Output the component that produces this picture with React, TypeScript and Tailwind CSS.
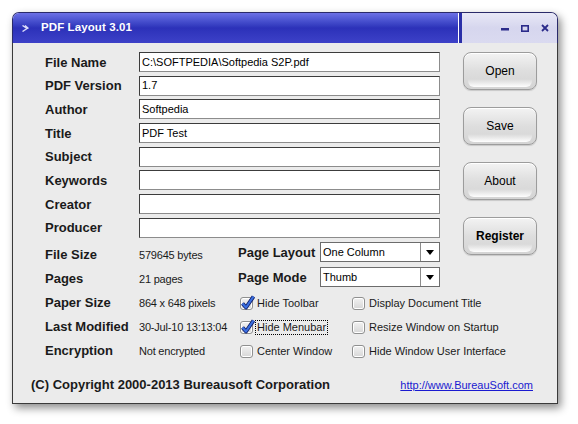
import React from 'react';

const font = { fontFamily: '"Liberation Sans", Arial, sans-serif' };

/**
 * Single text field row
 */
const FieldRow: React.FC<{ label: string; value?: string }> = ({ label, value = '' }) => (
    <div className="flex items-center h-[20px]">
        <div className="w-[94px] text-[13px] font-bold text-[#1a1a1a] leading-none">{label}</div>
        <div className="w-[301px] h-[20px] bg-white border border-t-[#3c3c3c] border-l-[#3c3c3c] border-b-[#8c8c8c] border-r-[#8c8c8c] flex items-center pl-[2px] text-[11px] text-black leading-none overflow-hidden whitespace-nowrap">
            {value}
        </div>
    </div>
);

/**
 * Glossy rounded button
 */
const GlossButton: React.FC<{ label: string; bold?: boolean }> = ({ label, bold }) => (
    <div className="relative w-[74px] h-[38px] rounded-[8px] border border-[#9c9c9c] bg-gradient-to-b from-[#f3f3f3] via-[#dedede] to-[#d4d4d4] shadow-[inset_0_1px_0_#ffffff,0_1px_1px_rgba(0,0,0,0.15)] flex items-center justify-center overflow-hidden">
        <div className="absolute left-[4px] right-[4px] bottom-[2px] h-[8px] rounded-b-[6px] bg-gradient-to-b from-transparent to-[#ffffff]"></div>
        <span className={`relative text-[12px] text-black ${bold ? 'font-bold' : ''}`}>{label}</span>
    </div>
);

/**
 * Checkbox
 */
const Check: React.FC<{ label: string; checked?: boolean; focus?: boolean }> = ({ label, checked, focus }) => (
    <div className="flex items-center h-[24px]">
        <div className="relative w-[13px] h-[13px] rounded-[3px] border border-[#8f9090] bg-gradient-to-b from-[#f2f2f2] to-[#d6d6d6] shadow-[inset_0_0_0_1px_#ffffff]">
            {checked && (
                <svg className="absolute left-[0px] top-[-3px]" width="14" height="15" viewBox="0 0 14 15">
                    <path d="M1.5 8.5 L5 12.5 L12.5 1.5" fill="none" stroke="#0f1f6a" strokeWidth="3.8" strokeLinejoin="round" />
                    <path d="M1.5 8.5 L5 12.5 L12.5 1.5" fill="none" stroke="#3b6fe0" strokeWidth="2.2" strokeLinejoin="round" />
                </svg>
            )}
        </div>
        <span className={`ml-[3px] text-[11px] text-[#1a1a1a] leading-[13px] px-[1px] ${focus ? 'outline outline-1 outline-dotted outline-black' : ''}`}>
            {label}
        </span>
    </div>
);

/**
 * Dropdown box
 */
const Dropdown: React.FC<{ value: string }> = ({ value }) => (
    <div className="w-[120px] h-[20px] bg-white border border-[#6c6c6c] flex">
        <div className="flex-1 flex items-center pl-[2px] text-[11px] text-black leading-none">{value}</div>
        <div className="w-[19px] border-l border-[#8c8c8c] flex items-center justify-center">
            <svg width="8" height="5" viewBox="0 0 8 5"><path d="M0 0 H8 L4 5 Z" fill="#000" /></svg>
        </div>
    </div>
);

const InfoLabel: React.FC<{ text: string }> = ({ text }) => (
    <div className="w-[94px] text-[13px] font-bold text-[#1a1a1a] leading-none">{text}</div>
);

const InfoValue: React.FC<{ text: string }> = ({ text }) => (
    <div className="w-[99px] text-[11px] text-[#1a1a1a] leading-none pt-[3px] tracking-[-0.2px] whitespace-nowrap">{text}</div>
);

export default function App() {
    return (
        <div className="w-[578px] h-[424px] bg-white overflow-hidden" style={font}>
            <div className="ml-[12px] mt-[12px] w-[546px] h-[392px] flex flex-col rounded-t-[7px] shadow-[3px_4px_8px_rgba(0,0,0,0.45)]">
                {/* Title bar */}
                <div className="h-[31px] flex rounded-t-[7px] overflow-hidden border border-b-0 border-[#2a2a6a]">
                    <div className="flex-1 flex items-center bg-gradient-to-b from-[#6c70e6] via-[#2c31b9] to-[#3d41c8] border-r-[3px] border-[#2a2fa8] shadow-[inset_-4px_0_0_-3px_#ffffff]">
                        <svg className="ml-[9px]" width="7" height="7" viewBox="0 0 7 7">
                            <path d="M0.5 0.5 L5 3.5 L0.5 6.5 M3 0.5 L6.5 3.5" fill="none" stroke="#d8daf8" strokeWidth="1.4" />
                        </svg>
                        <span className="ml-[12px] text-[11.5px] font-bold text-white tracking-[0.1px]">PDF Layout 3.01</span>
                    </div>
                    <div className="w-[95px] flex items-center justify-end gap-[12px] pr-[8px] bg-gradient-to-b from-[#e8e8f6] via-[#d6d6ee] to-[#dadaf0]">
                        <svg width="8" height="8" viewBox="0 0 8 8"><rect x="0" y="4" width="8" height="2.5" fill="#2b2b8a" /></svg>
                        <svg width="8" height="8" viewBox="0 0 8 8"><rect x="0.8" y="1.8" width="6.4" height="5.4" fill="none" stroke="#2b2b8a" strokeWidth="1.6" /></svg>
                        <svg width="8" height="8" viewBox="0 0 8 8"><path d="M1 1 L7 7 M7 1 L1 7" stroke="#2b2b8a" strokeWidth="1.8" /></svg>
                    </div>
                </div>

                {/* Body */}
                <div className="flex-1 flex flex-col bg-[#ebebeb] border border-t-0 border-[#3a3a3a]">
                    <div className="flex pt-[9px] pl-[32px]">
                        <div className="flex flex-col gap-[3.7px]">
                            <FieldRow label="File Name" value="C:\SOFTPEDIA\Softpedia S2P.pdf" />
                            <FieldRow label="PDF Version" value="1.7" />
                            <FieldRow label="Author" value="Softpedia" />
                            <FieldRow label="Title" value="PDF Test" />
                            <FieldRow label="Subject" />
                            <FieldRow label="Keywords" />
                            <FieldRow label="Creator" />
                            <FieldRow label="Producer" />
                        </div>
                        <div className="ml-[23px] flex flex-col gap-[17px]">
                            <GlossButton label="Open" />
                            <GlossButton label="Save" />
                            <GlossButton label="About" />
                            <GlossButton label="Register" bold />
                        </div>
                    </div>

                    {/* Info / options */}
                    <div className="flex pl-[32px] mt-[-13px]">
                        <div className="flex flex-col">
                            {[
                                ['File Size', '579645 bytes'],
                                ['Pages', '21 pages'],
                                ['Paper Size', '864 x 648 pixels'],
                                ['Last Modified', '30-Jul-10 13:13:04'],
                                ['Encryption', 'Not encrypted'],
                            ].map(([l, v]) => (
                                <div key={l} className="flex items-center h-[24px]">
                                    <InfoLabel text={l} />
                                    <InfoValue text={v} />
                                </div>
                            ))}
                        </div>
                        <div className="flex flex-col mt-[-2px]">
                            <div className="flex items-center h-[24px]">
                                <div className="w-[82px] text-[13px] font-bold text-[#1a1a1a] leading-none">Page Layout</div>
                                <Dropdown value="One Column" />
                            </div>
                            <div className="flex items-center h-[24px] mt-[1px]">
                                <div className="w-[82px] text-[13px] font-bold text-[#1a1a1a] leading-none">Page Mode</div>
                                <Dropdown value="Thumb" />
                            </div>
                            <div className="flex mt-[2px]">
                                <div className="flex flex-col w-[114px] pl-[2px]">
                                    <Check label="Hide Toolbar" checked />
                                    <Check label="Hide Menubar" checked focus />
                                    <Check label="Center Window" />
                                </div>
                                <div className="flex flex-col">
                                    <Check label="Display Document Title" />
                                    <Check label="Resize Window on Startup" />
                                    <Check label="Hide Window User Interface" />
                                </div>
                            </div>
                        </div>
                    </div>

                    {/* Footer */}
                    <div className="flex items-center justify-between pl-[18px] pr-[24px] mt-[12px] h-[20px]">
                        <span className="text-[13px] font-bold text-[#1a1a1a]">(C) Copyright 2000-2013 Bureausoft Corporation</span>
                        <span className="text-[11px] text-[#1a1ad0] underline">http://www.BureauSoft.com</span>
                    </div>
                </div>
            </div>
        </div>
    );
}
